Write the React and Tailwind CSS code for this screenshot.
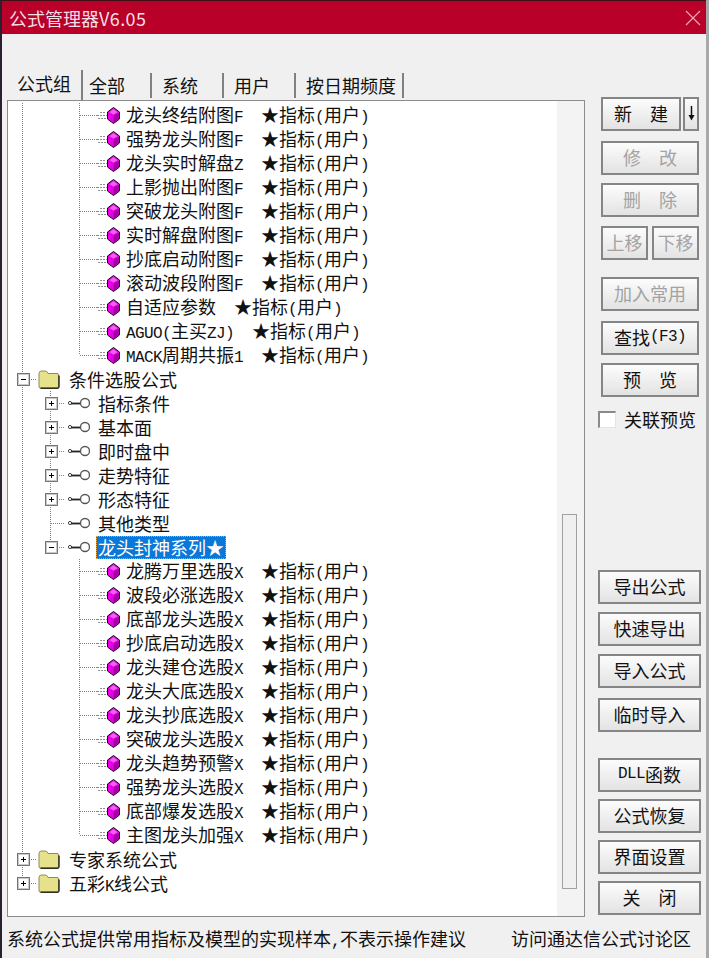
const cjk = { fontFamily: '"Noto Sans CJK SC", "Liberation Sans", sans-serif' };

// half-width chars are 9px wide in the original bitmap font
function Txt({ children }) {
  return children.split(/([\x20-\x7e]+)/).map((part, i) =>
    /^[\x20-\x7e]+$/.test(part) ? (
      <span key={i} className="font-['Liberation_Mono',monospace] text-[16px] leading-none tracking-[-0.6px]">{part}</span>
    ) : (
      <span key={i}>{part}</span>
    )
  );
}

function TreeCell({ v = 'none', h = false, box, width = 28, lineX = 14, mini = false }) {
  const y1 = v === 'bottom' ? 12 : 0;
  const y2 = v === 'top' ? 12 : 24;
  return (
    <svg width={width} height="24" className="shrink-0" shapeRendering="crispEdges">
      {v !== 'none' && (
        <line x1={lineX + 0.5} x2={lineX + 0.5} y1={y1} y2={y2} stroke="#808080" strokeDasharray="1 1" />
      )}
      {h && (
        <line x1={lineX + 1} x2={mini ? 33 : width} y1="12.5" y2="12.5" stroke="#808080" strokeDasharray="1 1" />
      )}
      {mini && (
        <g stroke="#8f8f8f" strokeDasharray="2 1">
          <line x1="36" x2="42" y1="9.5" y2="9.5" />
          <line x1="33" x2="43" y1="12.5" y2="12.5" />
          <line x1="34" x2="43" y1="15.5" y2="15.5" />
        </g>
      )}
      {box && (
        <g>
          <rect x={lineX - 4.5} y="6.5" width="12" height="12" fill="#fff" stroke="#757575" />
          <rect x={lineX - 3.5} y="7.5" width="10" height="10" fill="none" stroke="#c8c8c8" />
          <line x1={lineX - 1} x2={lineX + 4} y1="12.5" y2="12.5" stroke="#000" />
          {box === 'plus' && <line x1={lineX + 1.5} x2={lineX + 1.5} y1="10" y2="15" stroke="#000" />}
        </g>
      )}
    </svg>
  );
}

function Diamond() {
  return (
    <svg width="13" height="17" viewBox="0 0 13 17" className="shrink-0">
      <polygon points="6.5,0.5 12.5,5 12.5,12 6.5,16.5 0.5,12 0.5,5" fill="#e800e8" stroke="#200020" />
      <polygon points="6.5,9 12,5.8 12,11.7 6.5,16" fill="#a000a0" />
      <polygon points="6.5,2 10.5,5.2 6.5,7.6 2.5,5.2" fill="#f65cf6" />
    </svg>
  );
}

function Folder() {
  return (
    <svg width="22" height="19" viewBox="0 0 22 19" className="shrink-0">
      <path d="M1 17 V3.5 Q1 1 3.5 1 H7.5 Q9 1 10 3.5 H19 Q20.5 3.5 20.5 5 V16.5 Q20.5 18 19 18 H2 Q1 18 1 17 Z" fill="#e6e28c" stroke="#8f8b55" />
      <path d="M2.5 18.2 H19.5 Q21 18.2 21 16.5 V5.5" fill="none" stroke="#2f2f20" strokeWidth="1.5" />
    </svg>
  );
}

function KeyIcon() {
  return (
    <svg width="22" height="14" viewBox="0 0 22 14" className="shrink-0">
      <circle cx="2" cy="7" r="1.6" fill="none" stroke="#444" />
      <line x1="3" y1="7.5" x2="13" y2="7.5" stroke="#222" strokeWidth="1.8" />
      <circle cx="17" cy="7" r="4.5" fill="#fff" stroke="#555" strokeWidth="1.3" />
    </svg>
  );
}

function Leaf({ name, last }) {
  return (
    <div className="flex h-6 items-center whitespace-pre">
      <TreeCell v="full" />
      <TreeCell />
      <TreeCell v={last ? 'top' : 'full'} h width={43} lineX={15} mini />
      <Diamond />
      <span className="ml-[6px] pb-[2px]"><Txt>{name}</Txt></span>
    </div>
  );
}

function RootRow({ name, box, v }) {
  return (
    <div className="flex h-6 items-center whitespace-pre">
      <TreeCell v={v} h box={box} />
      <span className="ml-[2px] flex"><Folder /></span>
      <span className="ml-[9px]"><Txt>{name}</Txt></span>
    </div>
  );
}

function GroupRow({ name, box, v = 'full', selected }) {
  return (
    <div className="flex h-6 items-center whitespace-pre">
      <TreeCell v="full" />
      <TreeCell v={v} h box={box} />
      <span className="ml-[4px] flex"><KeyIcon /></span>
      <span
        className={
          selected
            ? 'ml-[6px] flex h-[23px] items-center border border-dotted border-[#e8a040] bg-[#0a78d8] px-px text-white'
            : 'ml-[6px] px-[2px]'
        }
      >
        <Txt>{name}</Txt>
      </span>
    </div>
  );
}

function Btn({ label, disabled, className = 'w-[98px]', children }) {
  return (
    <div
      className={`flex h-[34px] items-center justify-center whitespace-pre border-2 border-[#858585] bg-gradient-to-b from-[#fcfcfc] to-[#e3e3e3] pb-[2px] ${
        disabled ? 'text-[#a3a3a3]' : 'text-[#111]'
      } ${className}`}
    >
      {children || <Txt>{label}</Txt>}
    </div>
  );
}

const firstLeaves = [
  '龙头终结附图F  ★指标(用户)',
  '强势龙头附图F  ★指标(用户)',
  '龙头实时解盘Z  ★指标(用户)',
  '上影抛出附图F  ★指标(用户)',
  '突破龙头附图F  ★指标(用户)',
  '实时解盘附图F  ★指标(用户)',
  '抄底启动附图F  ★指标(用户)',
  '滚动波段附图F  ★指标(用户)',
  '自适应参数  ★指标(用户)',
  'AGUO(主买ZJ)  ★指标(用户)',
  'MACK周期共振1  ★指标(用户)',
];

const secondLeaves = [
  '龙腾万里选股X  ★指标(用户)',
  '波段必涨选股X  ★指标(用户)',
  '底部龙头选股X  ★指标(用户)',
  '抄底启动选股X  ★指标(用户)',
  '龙头建仓选股X  ★指标(用户)',
  '龙头大底选股X  ★指标(用户)',
  '龙头抄底选股X  ★指标(用户)',
  '突破龙头选股X  ★指标(用户)',
  '龙头趋势预警X  ★指标(用户)',
  '强势龙头选股X  ★指标(用户)',
  '底部爆发选股X  ★指标(用户)',
  '主图龙头加强X  ★指标(用户)',
];

const tabs = [
  ['全部', 'w-[69px] pl-[6px]'],
  ['系统', 'w-[72px] pl-[10px]'],
  ['用户', 'w-[72px] pl-[10px]'],
  ['按日期频度', 'w-[108px] pl-[10px]'],
];

export default function App() {
  return (
    <div style={cjk} className="flex h-[958px] w-[709px] flex-col overflow-hidden border-r-[3px] border-l-2 border-r-[#a8a8a8] border-l-[#2a2030] bg-[#f0f0f0] text-[18px] leading-6 text-[#111]">
      {/* title bar */}
      <div className="-ml-[2px] -mr-[3px] flex h-[34px] shrink-0 items-center justify-between border-t border-t-[#401018] bg-[#b80029] pl-[9px] pr-2 text-[#f6dfe4]">
        <span>公式管理器<span className="tracking-[0.4px]">V6.05</span></span>
        <svg width="16" height="16" viewBox="0 0 16 16">
          <path d="M1 1 L15 15 M15 1 L1 15" stroke="#e9a8b6" strokeWidth="1.2" />
        </svg>
      </div>

      <div className="flex flex-1">
        {/* left side: tabs + tree */}
        <div className="ml-[5px] w-[578px] shrink-0 pt-[36px]">
          <div className="flex h-[30px] items-end">
            <div className="flex h-[30px] w-[76px] items-center justify-center border-r-2 border-r-[#808080] pb-[5px]">公式组</div>
            {tabs.map(([label, cls]) => (
              <div key={label} className={`mb-[2px] flex h-[25px] items-center border-r-2 border-r-[#808080] pb-[2px] ${cls}`}>
                {label}
              </div>
            ))}
          </div>
          <div className="flex h-[817px] border border-[#8c8c8c] bg-white">
            <div className="flex-1 pt-[2px]">
              {firstLeaves.map((name, i) => (
                <Leaf key={name} name={name} last={i === firstLeaves.length - 1} />
              ))}
              <RootRow name="条件选股公式" box="minus" v="full" />
              <GroupRow name="指标条件" box="plus" />
              <GroupRow name="基本面" box="plus" />
              <GroupRow name="即时盘中" box="plus" />
              <GroupRow name="走势特征" box="plus" />
              <GroupRow name="形态特征" box="plus" />
              <GroupRow name="其他类型" />
              <GroupRow name="龙头封神系列★" box="minus" v="top" selected />
              {secondLeaves.map((name, i) => (
                <Leaf key={name} name={name} last={i === secondLeaves.length - 1} />
              ))}
              <RootRow name="专家系统公式" box="plus" v="full" />
              <RootRow name="五彩K线公式" box="plus" v="top" />
            </div>
            <div className="w-[27px] shrink-0 bg-[#f3f3f3] pl-[5px] pt-[413px]">
              <div className="h-[375px] w-[15px] border border-[#a0a0a0] bg-[#f0f0f0]" />
            </div>
          </div>
        </div>

        {/* right side buttons */}
        <div className="ml-[13px] flex w-[103px] flex-col pt-[63px]">
          <div className="ml-[3px] flex w-[98px] justify-between">
            <Btn label="新  建" className="w-[80px]" />
            <Btn className="w-[16px]">
              <svg width="9" height="15" viewBox="0 0 9 15">
                <path d="M4.5 0 V11" stroke="#111" strokeWidth="1.5" />
                <path d="M1.5 9 H7.5 L4.5 14.5 Z" fill="#111" />
              </svg>
            </Btn>
          </div>
          <div className="ml-[3px] mt-[10px]"><Btn label="修  改" disabled /></div>
          <div className="ml-[3px] mt-[8px]"><Btn label="删  除" disabled /></div>
          <div className="ml-[3px] mt-[9px] flex w-[98px] justify-between">
            <Btn label="上移" disabled className="w-[47px]" />
            <Btn label="下移" disabled className="w-[47px]" />
          </div>
          <div className="ml-[3px] mt-[17px]"><Btn label="加入常用" disabled /></div>
          <div className="ml-[3px] mt-[10px]"><Btn label="查找(F3)" /></div>
          <div className="ml-[3px] mt-[8px]"><Btn label="预  览" /></div>
          <div className="mt-[13px] flex h-[18px] items-center">
            <div className="h-[17px] w-[18px] shrink-0 border-t-2 border-l-2 border-r border-b border-t-[#8a8a8a] border-l-[#8a8a8a] border-r-[#e4e4e4] border-b-[#e4e4e4] bg-white" />
            <span className="ml-[8px]">关联预览</span>
          </div>
          <div className="mt-[142px] flex flex-col gap-[8px]">
            <Btn label="导出公式" className="w-[103px]" />
            <Btn label="快速导出" className="w-[103px]" />
            <Btn label="导入公式" className="w-[103px]" />
            <Btn label="临时导入" className="mt-[2px] w-[103px]" />
          </div>
          <div className="mt-[26px] flex flex-col gap-[7px]">
            <Btn label="DLL函数" className="w-[103px]" />
            <Btn label="公式恢复" className="w-[103px]" />
            <Btn label="界面设置" className="w-[103px]" />
            <Btn label="关  闭" className="w-[103px]" />
          </div>
        </div>
      </div>

      {/* status line */}
      <div className="flex h-[41px] shrink-0 items-start justify-between pl-[5px] pr-[15px] pt-[9px] whitespace-pre">
        <span><Txt>系统公式提供常用指标及模型的实现样本,不表示操作建议</Txt></span>
        <span>访问通达信公式讨论区</span>
      </div>
    </div>
  );
}
